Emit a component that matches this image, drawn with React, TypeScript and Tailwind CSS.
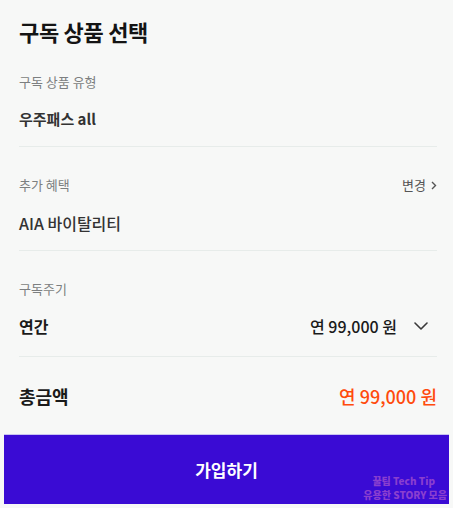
const LABEL = 'text-[13px] leading-5 text-[#7c7f80]';

function Chevron() {
  return (
    <svg width="14" height="8" viewBox="0 0 14 8" fill="none" className="text-[#3a3a3a]">
      <path d="M1 1l6 6 6-6" stroke="currentColor" strokeWidth="1.6" strokeLinecap="round" strokeLinejoin="round" />
    </svg>
  );
}

export default function App() {
  return (
    <div
      className="w-[453px] h-[508px] bg-[#f7f8f7] flex flex-col"
      style={{ fontFamily: '"Noto Sans CJK KR", "Noto Sans", sans-serif' }}
    >
      <div className="ml-[19px] mr-[16px] flex flex-col">
        <div className="h-[62px] flex items-center">
          <h1 className="text-[22px] leading-8 font-bold text-[#141414] tracking-[-0.3px]">구독 상품 선택</h1>
        </div>

        <section className="pt-[10px] pb-[15px] border-b border-[#e7ecea]">
          <p className={LABEL}>구독 상품 유형</p>
          <p className="mt-[15px] text-[15px] leading-6 font-semibold text-[#333]">우주패스 all</p>
        </section>

        <section className="pt-[28px] pb-[15px] border-b border-[#e7ecea]">
          <div className="flex items-center justify-between">
            <p className={LABEL}>추가 혜택</p>
            <button className="flex items-center gap-[5px] text-[13px] leading-5 text-[#555]">
              변경
              <svg width="6" height="9" viewBox="0 0 6 9" fill="none">
                <path d="M1 1l3.5 3.5L1 8" stroke="currentColor" strokeWidth="1.4" />
              </svg>
            </button>
          </div>
          <p className="mt-[16px] text-[16px] leading-6 font-medium text-[#333]">AIA 바이탈리티</p>
        </section>

        <section className="pt-[28px] pb-[18px] border-b border-[#e7ecea]">
          <p className={LABEL}>구독주기</p>
          <div className="mt-[15px] flex items-center justify-between h-6">
            <p className="text-[16px] leading-6 font-bold text-[#1a1a1a]">연간</p>
            <div className="flex items-center gap-[17px] pr-[9px]">
              <span className="text-[16px] leading-6 font-medium text-[#1a1a1a]">연 99,000 원</span>
              <Chevron />
            </div>
          </div>
        </section>

        <div className="pt-[25px] pb-[24px] flex items-center justify-between">
          <p className="text-[18px] leading-7 font-bold text-[#1a1a1a]">총금액</p>
          <p className="text-[18px] leading-7 font-medium text-[#ff4b0d]">연 99,000 원</p>
        </div>
      </div>

      <button className="relative mx-[4px] h-[70px] bg-[#3a0bd4] border-t border-[#c9c3f1] flex items-center justify-center">
        <span className="text-[17px] font-semibold text-white">가입하기</span>
        <span className="absolute right-[2px] bottom-[2px] flex flex-col items-end text-[10px] leading-[14px] font-black text-[#8a3fcf]">
          <span className="mr-[12px]">꿀팁 Tech Tip</span>
          <span>유용한 STORY 모음</span>
        </span>
      </button>
    </div>
  );
}
